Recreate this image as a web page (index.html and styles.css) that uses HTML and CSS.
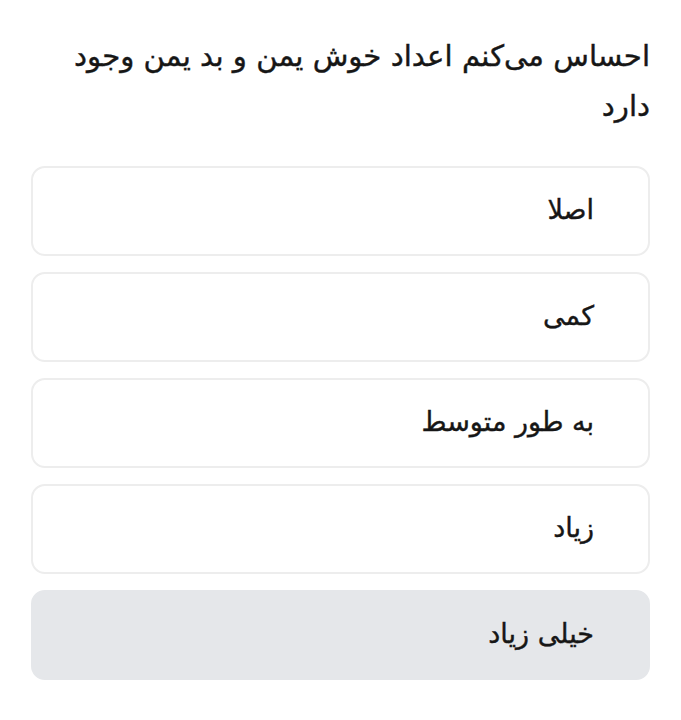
FILE: index.html
```html
<!DOCTYPE html>
<html lang="fa" dir="rtl">
<head>
<meta charset="utf-8">
<link rel="stylesheet" href="styles.css">
</head>
<body>
<div class="page">
  <h2 class="question">احساس می‌کنم اعداد خوش یمن و بد یمن وجود دارد</h2>
  <div class="options">
    <div class="option">اصلا</div>
    <div class="option">کمی</div>
    <div class="option">به طور متوسط</div>
    <div class="option">زیاد</div>
    <div class="option selected">خیلی زیاد</div>
  </div>
</div>
</body>
</html>
```
FILE: styles.css
```css
html, body {
  margin: 0;
  padding: 0;
  background: #ffffff;
}
body {
  font-family: "DejaVu Sans", sans-serif;
  color: #161616;
}
.page {
  padding: 31px 31px 0 31px;
}
.question {
  margin: 0 0 35px 0;
  font-size: 29.2px;
  font-weight: normal;
  line-height: 50px;
  -webkit-text-stroke: 0.4px #161616;
}
.options {
  display: flex;
  flex-direction: column;
  gap: 16px;
}
.option {
  box-sizing: border-box;
  height: 90px;
  border: 2px solid #ededed;
  border-radius: 14px;
  display: flex;
  align-items: center;
  padding-right: 54px;
  padding-bottom: 4px;
  font-size: 27px;
  -webkit-text-stroke: 0.4px #161616;
}
.option.selected {
  background: #e5e7ea;
  border-color: #e5e7ea;
}
```
